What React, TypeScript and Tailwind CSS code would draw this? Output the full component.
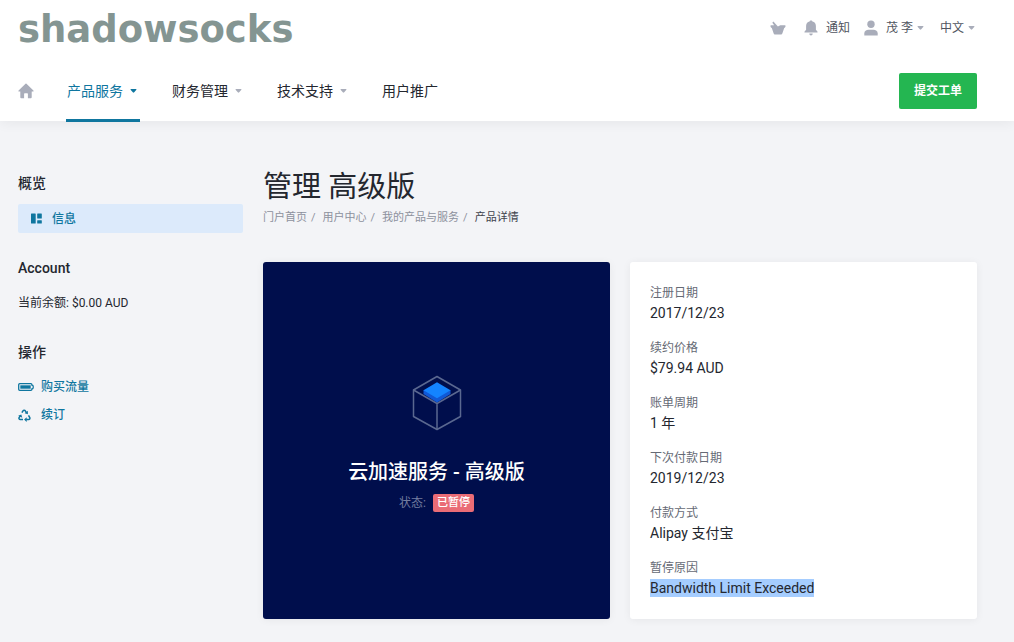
const navItems = [
  { label: "产品服务", menu: true, active: true },
  { label: "财务管理", menu: true, active: false },
  { label: "技术支持", menu: true, active: false },
  { label: "用户推广", menu: false, active: false },
];

const crumbs = ["门户首页", "用户中心", "我的产品与服务"];

const details = [
  { label: "注册日期", value: "2017/12/23" },
  { label: "续约价格", value: "$79.94 AUD" },
  { label: "账单周期", value: "1 年" },
  { label: "下次付款日期", value: "2019/12/23" },
  { label: "付款方式", value: "Alipay 支付宝" },
  { label: "暂停原因", value: "Bandwidth Limit Exceeded", selected: true },
];

function Caret({ className = "" }: { className?: string }) {
  return (
    <svg viewBox="0 0 7 4" className={`h-1 w-[7px] ${className}`} fill="currentColor" aria-hidden="true">
      <path d="M1.200 0h4.600c.6 0 .8.600.4 1L4.200 3.300a1 1 0 0 1-1.400 0L.8 1C.4.6.6 0 1.200 0Z" />
    </svg>
  );
}

function BasketIcon() {
  return (
    <svg viewBox="0 0 16 14" className="h-3.5 w-4" fill="currentColor" aria-hidden="true">
      <path d="M3.400.4 7.900 5.400 10.300 4.200h4.300c.8 0 1.100.600.9 1.200-.2.800-.7 1.400-1.300 1.600l-1.700 4.900c-.4 1-.9 1.500-1.800 1.500H5.300c-.9 0-1.400-.5-1.800-1.500L1.800 7C1.200 6.800.7 6.200.5 5.400.3 4.800.6 4.200 1.400 4.200h2.800L2.300 1.700Z" />
    </svg>
  );
}

function BellIcon() {
  return (
    <svg viewBox="0 0 14 16" className="h-4 w-3.5" fill="currentColor" aria-hidden="true">
      <path d="M7 .5c.9 0 1.300.4 1.400 1 2.300.5 3.500 2.300 3.500 4.500v3.800l1.500 1.600c.4.500.2 1.200-.5 1.200H1.100c-.7 0-.9-.7-.5-1.200l1.500-1.600V6c0-2.200 1.200-4 3.500-4.500.1-.6.500-1 1.400-1Z" />
      <path d="M5.300 13.500h3.400c0 1.200-.7 2-1.700 2s-1.700-.8-1.700-2Z" />
    </svg>
  );
}

function UserIcon() {
  return (
    <svg viewBox="0 0 14 16" className="h-4 w-3.5" fill="currentColor" aria-hidden="true">
      <circle cx="7" cy="4.200" r="3.700" />
      <path d="M.3 15.500v-2c0-2.400 2-3.700 4.200-3.700h5c2.200 0 4.200 1.300 4.200 3.700v2Z" />
    </svg>
  );
}

function HomeIcon() {
  return (
    <svg viewBox="0 0 16 16" className="size-4" fill="currentColor" aria-hidden="true">
      <path d="M7.500.8a.8.8 0 0 1 1 0l6.900 6.600c.5.500.2 1.100-.4 1.100h-1.300v5.800c0 .6-.3.900-.9.900H9.900v-4.300c0-.4-.2-.6-.6-.6H6.700c-.4 0-.6.200-.6.600v4.300H3.200c-.6 0-.9-.3-.9-.9V8.500H1c-.6 0-.9-.6-.4-1.100Z" />
    </svg>
  );
}

function BlocksIcon() {
  return (
    <svg viewBox="0 0 11 11" className="size-[11px]" fill="currentColor" aria-hidden="true">
      <rect x="0" y="0.500" width="4.700" height="10" rx=".5" />
      <rect x="6.200" y="0.500" width="4.600" height="5" rx=".5" />
      <rect x="6.200" y="7.200" width="4.600" height="3.300" rx=".5" />
    </svg>
  );
}

function BatteryIcon() {
  return (
    <svg viewBox="0 0 16 8" className="h-2 w-4" aria-hidden="true">
      <path d="M1.700.7h11.200c.6 0 1 .4 1 1v.3c.9 0 1.400.7 1.400 2s-.5 2-1.400 2v.3c0 .6-.4 1-1 1H1.700c-.6 0-1-.4-1-1V1.700c0-.6.400-1 1-1Z" fill="none" stroke="currentColor" strokeWidth="1.300" />
      <rect x="2.300" y="2.300" width="10.400" height="3.400" fill="currentColor" />
    </svg>
  );
}

// three bent arrows chasing each other around a triangle
function RenewIcon() {
  return (
    <svg viewBox="0 0 13 13" className="size-[13px]" aria-hidden="true">
      <g fill="none" stroke="currentColor" strokeWidth="1.500" strokeLinejoin="round">
        <path d="M3.900 3.700 5 1.800c.4-.7 1.900-.7 2.300 0l1 1.700" />
        <path d="M10.500 6.400l1.300 2.300c.4.800-.1 1.900-1.100 1.900H8.200" />
        <path d="M5 10.600H2.200C1.200 10.600.7 9.500 1.100 8.700l1.100-1.900" />
      </g>
      <g fill="currentColor">
        <path d="M9.900 1.800v3.400L6.700 4.300Z" />
        <path d="M8.700 8.300v4.600L6.100 10.600Z" />
        <path d="M.2 6.800l3.100-1.200 1 3.200Z" />
      </g>
    </svg>
  );
}

function CubeIcon() {
  return (
    <svg viewBox="0 0 50 56" className="h-14 w-[50px]" aria-hidden="true">
      <g fill="none" stroke="#5a6890" strokeWidth="1.500" strokeLinejoin="round">
        <path d="M25 1.500 48.500 15v26.500L25 54.500 1.500 41.500V15Z" />
        <path d="M1.500 15 25 28.500 48.500 15M25 28.500v26" />
      </g>
      <path d="M11.500 15v4L25 27.500l13.500-8.500v-4Z" fill="#1159d6" />
      <path d="M25 7.200 38.500 15.200 25 23.200 11.500 15.200Z" fill="#1484ff" />
    </svg>
  );
}

function Header() {
  return (
    <header className="bg-white pr-[37px] pl-[18px] shadow-[0_2px_12px_rgba(0,0,0,0.06)]">
      <div className="flex justify-between">
        <a href="#" className="font-['DejaVu_Sans',sans-serif] text-[37px] leading-[60px] font-bold text-[#849592]">
          shadowsocks
        </a>
        <div className="flex h-14 items-center pr-0.5 text-xs text-[#505460]">
          <a href="#" aria-label="购物车" className="mr-[18px] text-[#a9adba]">
            <BasketIcon />
          </a>
          <a href="#" className="mr-3.5 flex items-center gap-2">
            <span className="text-[#a9adba]"><BellIcon /></span>
            通知
          </a>
          <button type="button" className="mr-4 flex items-center">
            <span className="mr-2 text-[#a9adba]"><UserIcon /></span>
            茂 李
            <Caret className="ml-1 text-[#a9adba]" />
          </button>
          <button type="button" className="flex items-center">
            中文
            <Caret className="ml-1 text-[#a9adba]" />
          </button>
        </div>
      </div>
      <div className="flex items-center justify-between">
        <nav className="-mb-px flex h-[62px] items-stretch text-sm">
          <a href="#" aria-label="首页" className="mr-8 flex items-center text-[#a9adba]">
            <HomeIcon />
          </a>
          <ul className="flex gap-[31px]">
            {navItems.map((item) => (
              <li key={item.label} className="flex">
                <a
                  href="#"
                  className={`flex items-center border-y-[3px] border-t-transparent px-px ${
                    item.active ? "border-b-[#0f769f] text-[#0f769f]" : "border-b-transparent text-[#24272f]"
                  }`}
                >
                  {item.label}
                  {item.menu && (
                    <Caret className={item.active ? "mr-0.5 ml-[7px]" : "mr-0.5 ml-[7px] text-[#a9adba]"} />
                  )}
                </a>
              </li>
            ))}
          </ul>
        </nav>
        <button type="button" className="h-9 rounded-xs bg-[#24b651] px-[15px] text-xs font-bold text-white">
          提交工单
        </button>
      </div>
    </header>
  );
}

function Sidebar() {
  return (
    <aside className="flex w-[225px] shrink-0 flex-col gap-[25px] pt-[5px] text-xs">
      <section>
        <h2 className="mb-[11px] text-sm leading-5 font-medium">概览</h2>
        <a href="#" className="flex h-[29px] items-center gap-2.5 rounded-xs bg-[#dceafb] px-[13px] font-medium text-[#0f769f]">
          <BlocksIcon />
          信息
        </a>
      </section>
      <section>
        <h2 className="mb-[11px] text-sm leading-5 font-medium">Account</h2>
        <p className="leading-7">当前余额: $0.00 AUD</p>
      </section>
      <section>
        <h2 className="mb-[11px] text-sm leading-5 font-medium">操作</h2>
        <ul className="font-medium text-[#0f769f]">
          <li>
            <a href="#" className="flex h-7 items-center">
              <span className="w-[23px]"><BatteryIcon /></span>
              购买流量
            </a>
          </li>
          <li>
            <a href="#" className="flex h-7 items-center">
              <span className="w-[23px]"><RenewIcon /></span>
              续订
            </a>
          </li>
        </ul>
      </section>
    </aside>
  );
}

export default function App() {
  return (
    <div className="min-h-screen bg-[#f3f4f7] font-[Roboto,'Noto_Sans_CJK_SC',sans-serif] text-[#24272f]">
      <Header />
      <div className="flex gap-5 pt-[47px] pr-[37px] pb-6 pl-[18px]">
        <Sidebar />
        <main className="min-w-0 flex-1">
          <h1 className="text-[29px] leading-[38px]">管理 高级版</h1>
          <nav aria-label="breadcrumb" className="mt-1">
            <ol className="flex text-[11px] leading-4 text-[#8d919d]">
              {crumbs.map((crumb) => (
                <li key={crumb}>
                  <a href="#">{crumb}</a>
                  <span className="mr-[7px] ml-1">/</span>
                </li>
              ))}
              <li aria-current="page" className="text-[#3f434d]">产品详情</li>
            </ol>
          </nav>

          <div className="mt-9 grid grid-cols-2 gap-5">
            <section className="flex flex-col items-center justify-center rounded-[3px] bg-[#000e4c] pt-1.5 shadow-[0_1px_8px_rgba(0,0,0,0.06)]">
              <CubeIcon />
              <h2 className="mt-[27px] mb-2 text-xl leading-7 font-medium text-white">云加速服务 - 高级版</h2>
              <p className="flex items-center gap-[7px] text-xs leading-[18px] text-[#747d9f]">
                状态:
                <span className="rounded-xs bg-[#ea6c76] px-1 text-[11px] font-medium text-white">已暂停</span>
              </p>
            </section>
            <dl className="flex flex-col gap-[15px] rounded-[3px] bg-white px-5 py-[21px] shadow-[0_1px_8px_rgba(0,0,0,0.06)]">
              {details.map((d) => (
                <div key={d.label}>
                  <dt className="text-xs leading-5 text-[#666a75]">{d.label}</dt>
                  <dd className="text-sm leading-5">
                    {d.selected ? <span className="bg-[#a5cdff] py-px">{d.value}</span> : d.value}
                  </dd>
                </div>
              ))}
            </dl>
          </div>
        </main>
      </div>
    </div>
  );
}
